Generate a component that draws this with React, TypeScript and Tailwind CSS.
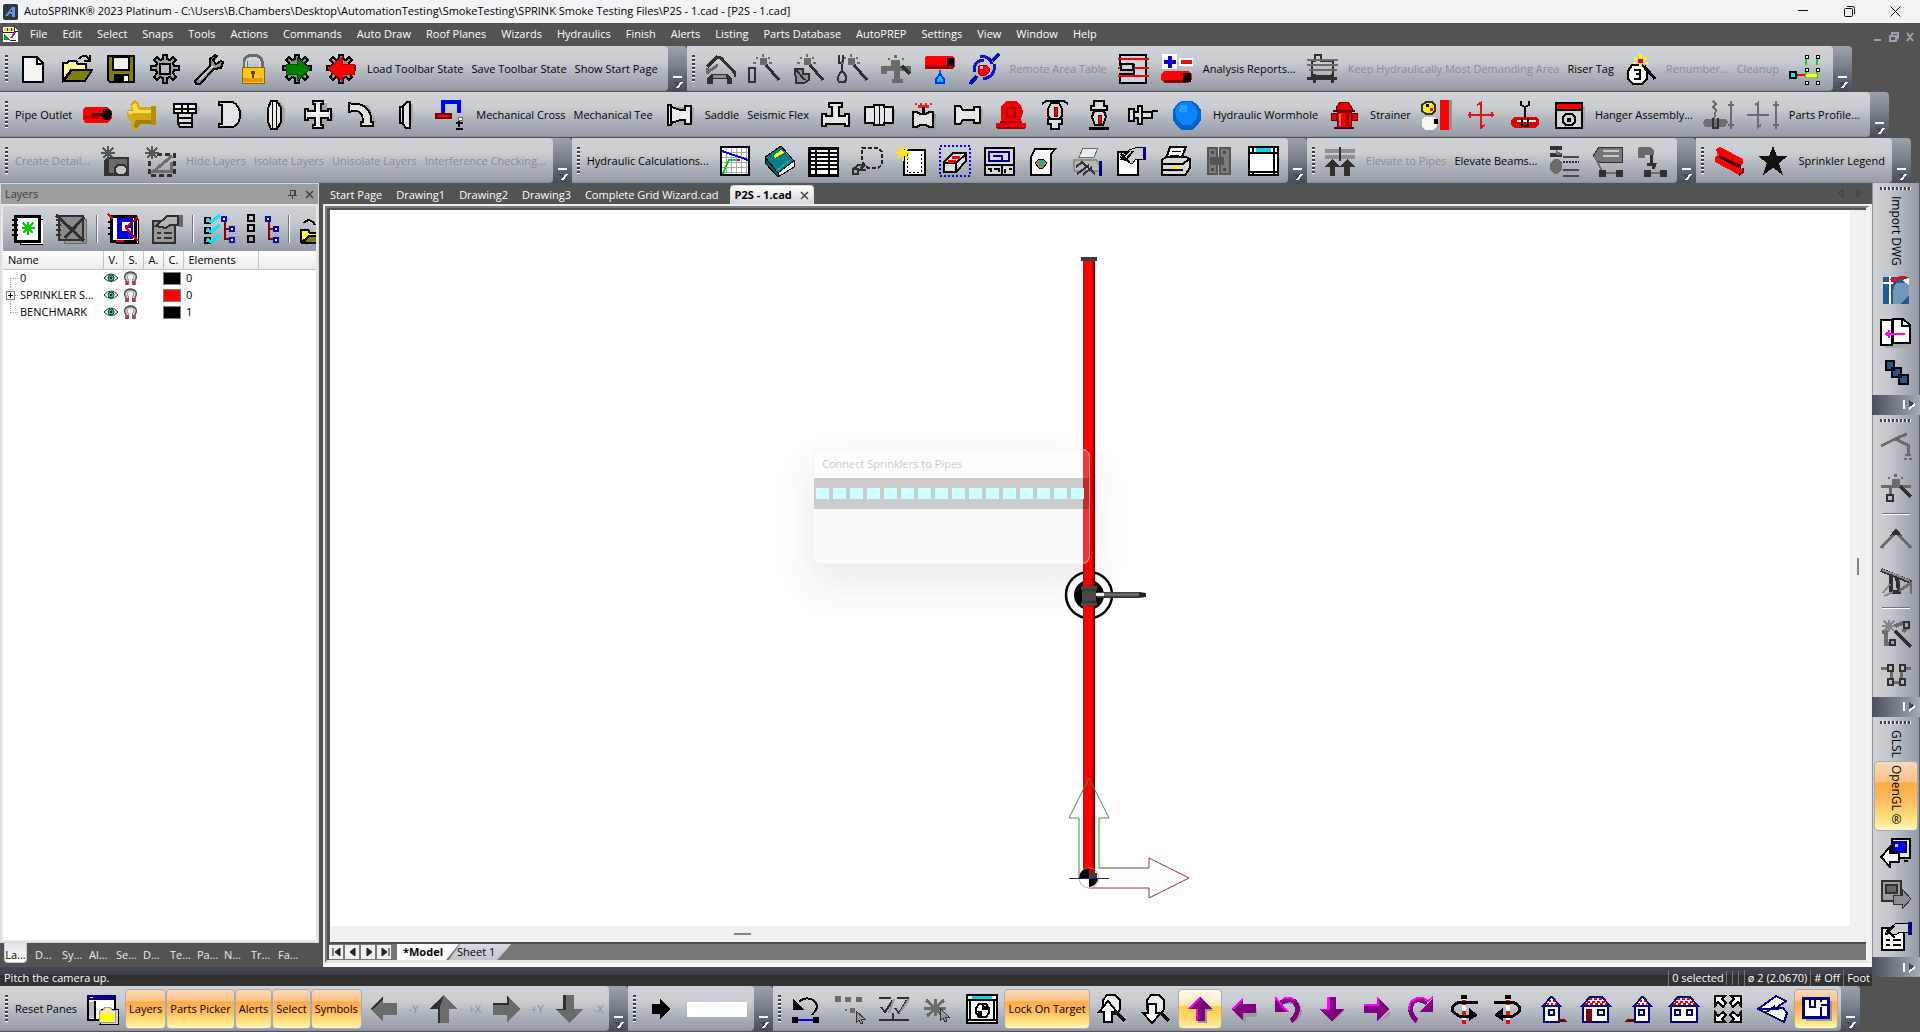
import React from "react";

type Shape = [d: string, fill?: string, stroke?: string, width?: number, dash?: string];

const K = "#000";
const W = "#fff";
const G = "#6b6b6b";
const D = "#303030";
const L = "#d4d7dc";
const R = "#ff0000";
const M = "#800080";
const N = "#000080";
const O = "#808000";
const S = "#9a9a9a";

const gearPath =
  "M14 2h4v4l3 1 3-3 3 3-3 3 1 3h5v4h-5l-1 3 3 4-3 3-3-3-3 1v5h-4v-5l-3-1-3 3-3-3 3-4-1-3H2v-4h5l1-3-3-3 3-3 3 3 3-1z";
const wand: Shape[] = [
  ["M14 1h2v3h-2zM8 4h2v2H8zM20 4h2v2h-2zM5 9h3v2H5z", G],
  ["M12 5h7v7h-7zM21 9h3v2h-3z", G],
  ["M18 12L31 27", "none", D, 3],
];

const icons: Record<string, Shape[]> = {
  newDoc: [["M6 4h14l6 6v19H6z", "#f4f4f4", K, 2], ["M20 4v7h6", "none", K, 2]],
  open: [
    ["M2 28V10h4l2-2h7l2 3h8v6H10z", "#ffff9c", K, 2],
    ["M3 28L11 17h20L24 28z", O, K, 2],
    ["M18 6q5-6 9-1l2 2m0-5v6h-6", "none", K, 2],
  ],
  save: [
    ["M3 3h26v26H5l-2-2z", O, K, 2],
    ["M8 4h16v13H8z", "#f0f0f0", K, 2],
    ["M9 21h15v8H9z", K],
    ["M19 23h4v5h-4z", W],
  ],
  gear: [[gearPath, "#a2a2a2", K, 2], ["M11 11h10v10H11z", "#b9bcc2", K, 2]],
  wrench: [
    ["M2 28L17 13V6l5-4 2 1-4 4 3 4 5-3 2 1-2 6-7 1L7 31H3z", "#8e8e8e", K, 2],
    ["M6 27L20 13", "none", "#c4c4c4", 2],
  ],
  lock: [
    ["M8 15V8q1-5 8-5t8 5v7", "none", G, 5],
    ["M9 14V9q1-4 7-4t7 4v5", "none", L, 2],
    ["M5 14h22v16H5z", "#ffc414", "#8b6a00", 1],
    ["M6 25h20v4H6z", "#e09800"],
    ["M14 18h4v3h-1v4h-2v-4h-1z", "#5a4300"],
  ],
  gearIn: [[gearPath, "#8a8a8a", K, 2], ["M5 11h11V4l13 12-13 12v-7H5z", "#008000", "#045004", 1]],
  gearOut: [[gearPath, "#8a8a8a", K, 2], ["M29 11H17V4L3 16l14 12v-7h12z", R, "#c00000", 1]],
  pipeHead: [
    ["M3 14L13 4l4 1 14 15v4", "none", D, 3],
    ["M3 15v6M4 19L14 12", "none", G, 3],
    ["M3 31v-6l4-4h17l4 5v5h-5v-5H9v5z", D],
    ["M9 22h13v3H9z", "#8f8f8f"],
  ],
  wandPipe: [["M1 15h6v14H1z", "none", D, 2], ...wand],
  wandFit: [["M3 16h8v5h6v6l-5 3H4z", "#8d9096", D, 2], ["M3 16l10 11", "none", D, 2], ...wand],
  wandLoop: [["M3 2v8h4V2M6 8v10q-6 6-3 11h6q3-6-3-11", "none", D, 2], ...wand],
  wandTee: [
    ["M1 13h30v8h-4v-3h-7v8h3v4h-11v-4h2v-8H7v3H1z", G],
    ["M14 2h3v3h-3zM8 5h2v2H8zM22 5h2v2h-2zM11 7h9v7h-9z", G],
    ["M22 13l8 8", "none", D, 3],
  ],
  redDrop: [
    ["M1 6h28l2 2v5l-3 3H1z", "#b00000"],
    ["M2 3h26l3 3v6H1V5z", R],
    ["M23 5h7v8h-7z", K],
    ["M16 17v6", "none", "#0060ff", 2],
    ["M16 21l4 5v4h-8v-4z", "#00c8ff", "#0030ff", 2],
  ],
  orbit: [
    ["M2 31L9 23M24 8l7-7", "none", "#0010b0", 4],
    ["M6 19q0-12 10-12M26 11q2 13-11 15M12 4q9-2 12 7", "none", "#1010d0", 3],
    ["M12 12h6l3 3v4l-3 3h-6l-2-3v-4z", R, "#8b0000", 1],
    ["M12 13h3v3h-3z", "#ffb0b0"],
  ],
  remote: [
    ["M3 2h26v28H3v-9h14v-9H3z", "#d4d4d8", K, 2],
    ["M1 6h31M1 15h31M1 23h31", "none", R, 2],
    ["M4 11h12v6H4z", L, K, 2],
  ],
  analysis: [
    ["M1 1h15v15H1zM18 5h14v8H18z", W],
    ["M7 3h4v4h4v4h-4v4H7v-4H3V7h4z", "#0000e0"],
    ["M20 7h11v4H20z", R],
    ["M3 18h24l4 4v5l-4 3H3l-3-4v-4z", R],
    ["M3 27h22v3H3z", "#8b0000"],
    ["M22 20h8v9h-8z", K],
  ],
  table3d: [
    ["M9 2h6v6h12v15H6V8h3z", "none", D, 2],
    ["M1 7h31M1 12h31M3 17h28", "none", G, 2],
    ["M1 25h30M8 21v9M26 21v9", "none", D, 3],
  ],
  number: [
    ["M8 12h10l5 6v8l-5 5H9l-5-5v-8z", W, K, 2],
    ["M10 17h6v4h-4 4v5h-6", "none", K, 2],
    ["M15 1h3v4h-3zM10 4h3v3h-3zM20 4h3v3h-3zM9 9h3v2H9zM21 9h3v2h-3zM15 11h3v3h-3z", "#ffff00"],
    ["M14 6h5v4h-5z", R],
    ["M20 13L31 26", "none", K, 3],
  ],
  cleanup: [
    ["M17 4v24M28 4v24", "none", "#00e000", 2, "8 5"],
    ["M17 22h11", "none", "#ffff00", 3],
    ["M8 22h8", "none", R, 2],
    ["M1 19h6v6H1z", "#00e8ff", K, 2],
    ["M16 2h3v3h-3zM27 2h3v3h-3zM16 15h3v3h-3zM27 15h3v3h-3zM16 28h3v3h-3zM27 28h3v3h-3z", W, K, 1],
  ],
  redPipe: [
    ["M3 8h22l5 4v8l-5 4H3l-2-4v-9z", R],
    ["M2 17h19v3H2z", "#c00000"],
    ["M10 14h12v3H10z", "#500"],
    ["M22 10h6l2 5-2 6h-6l-2-6z", K],
  ],
  goldTee: [
    ["M4 5l5-4 3 2 2 5h16v17H15l-4 6-3 1-4-4 2-5-5-4V12l5-2z", "#d6a812"],
    ["M2 12h6l-2-6 4-2 3 7h13v3H8L3 16z", "#ffe04a"],
    ["M25 7h5v19h-5z", "#b88c08"],
    ["M10 21h15v4H14l-4 5-2-3z", "#a47c08"],
  ],
  plug: [
    ["M6 7h24v9H6z", "#b8babd"],
    ["M4 5h22v9H4z", "#f2f2f2", K, 2],
    ["M4 10h22M12 5v9M18 5v9", "none", K, 2],
    ["M8 14v11l2 3h12V14zM8 19h14M8 24h14", "#dcdee0", K, 2],
  ],
  dcap: [["M8 5h14q7 5 7 12t-7 13H8z", "#b0b0b0"], ["M5 3h14q7 4 7 13t-7 12H5v-3h3V6H5z", "#e2e4e8", K, 2]],
  coupling: [["M17 3h6l4 7v14l-4 7h-6z", "#a4a4a4"], ["M13 2h6l4 7v14l-4 7h-6l-3-7V9z", "#eee", K, 2], ["M14 3v26M18 3v26", "none", K, 1]],
  cross: [
    ["M13 4h12v28H13zM4 14h30v8H4z", "#a4a4a4"],
    ["M11 2h10v3h-2v7h7v-2h3v11h-3v-2h-7v7h2v3H11v-3h2v-7H6v2H3V10h3v2h7V5h-2z", "#e4e6ea", K, 2],
    ["M15 6v20M6 14h20", "none", W, 2],
  ],
  elbow: [
    ["M7 7h12q8 3 8 20l3 3v-8L22 6z", "#a4a4a4"],
    ["M3 4v9l4-1q10-1 10 11h-2v4h12v-4h-2q1-15-13-18H7L3 4z", "#e2e4e6", K, 2],
  ],
  cap: [["M19 5h4v26h-4z", "#a4a4a4"], ["M17 3h3v26h-4l-3-4V7zM13 8h-3v16h3", "#e4e4e4", K, 2]],
  goose: [
    ["M9 15V3h16v11", "none", "#0000ff", 4],
    ["M2 15h15v4H2z", R, "#700", 2],
    ["M24 18h4v3h-4z", W, G, 1],
    ["M22 24h7M25 22v6M22 30h7", "none", K, 2],
  ],
  saddleFit: [["M9 8h22v18H9z", "#a8a8a8"], ["M5 6h3v20H5zM8 8l10 3h4V7h6v18h-6v-4h-4L8 24z", "#eceef0", K, 2]],
  tee: [
    ["M5 18h27v11H5z", "#a8a8a8"],
    ["M10 4h13v4h-3v9h6v-2h4v12h-4v-2H7v2H3V15h4v2h6V8h-3z", "#e6e8ea", K, 2],
  ],
  union: [["M5 10h27v17H5z", "#a8a8a8"], ["M2 8h9V6h10v2h9v16h-9v2H11v-2H2z", "#e4e6e8", K, 2], ["M11 6v20M16 6v20M21 6v20", "none", K, 1]],
  flexFit: [
    ["M28 15v15H9", "none", S, 2],
    ["M6 13h4l3 2h6l3-2h4v15h-4l-3-2h-6l-3 2H6z", "#e4e4e4", K, 2],
    ["M8 4h2v2H8zM13 4h2v2h-2zM18 4h2v2h-2zM23 4h2v2h-2zM11 6h11v3H11z", "#e02020"],
    ["M15 8h3v6h-3z", K],
  ],
  reducer: [["M6 10h26v16H6z", "#a8a8a8"], ["M4 7h5l3 4h11V8h6v16h-6v-3H12l-3 4H4z", "#e4e6e8", K, 2]],
  valve: [
    ["M11 2h10l5 4 2 7-2 7 1 4h4v5H1v-5h5V7z", "#f00000"],
    ["M12 9h8v9h-8z", "none", "#a80000", 2],
    ["M2 29h28M5 23h22", "none", "#900", 2],
  ],
  pendent: [
    ["M3 5l4-3h18l4 3", "none", K, 2],
    ["M12 4h8l3 6v7l-4 4h-6l-4-4v-7z", L, K, 2],
    ["M15 8h3v9h-3z", R, "#700", 1],
    ["M9 20h14v5h-3v5h-8v-5H9z", "#dcdcdc", K, 2],
  ],
  upright: [
    ["M11 2h10v5h3v4H8V7h3z", "#dcdcdc", K, 2],
    ["M11 12h10l2 6-3 8h-8l-3-8z", L, K, 2],
    ["M15 16h3v8h-3z", R, "#700", 1],
    ["M6 29h20", "none", K, 3],
  ],
  sidewall: [["M2 10h5v12H2zM7 13h4V7h4v18h-4v-6H7zM15 13h10v6H15z", "#e0e0e0", K, 2], ["M25 12h6", "none", K, 2]],
  sphere: [
    ["M11 2h10l5 3 4 6v10l-4 6-5 4H11l-5-4-4-6V11l4-6z", "#0064d0"],
    ["M10 3h9l5 4 3 6-2 8-6 5h-7l-6-5-2-8 2-6z", "#0a84f8"],
    ["M9 6h7v7H8z", "#2b9cff"],
  ],
  hydrant: [
    ["M12 3h8l4 6v3H8V9zM9 13h14v15H9zM3 14h5v7H3zM24 14h5v7h-5z", "#f00000", "#600", 1],
    ["M5 12h22M6 29h20", "none", "#500", 2],
    ["M12 15v12", "none", "#ff6060", 2],
    ["M19 15v12", "none", "#900", 3],
  ],
  snowman: [
    ["M5 3h6l3 3v6l-3 3H5l-4-3V6z", "#fff200", "#333", 2],
    ["M5 5h3v3H5z", "#0000d0"],
    ["M9 9h3v3H9z", R],
    ["M3 18h10l3 3v7l-4 3H5l-4-3v-7z", "#f6f6f6"],
    ["M13 20h4v5h-4z", K],
    ["M19 1h9v30h-9z", R],
    ["M28 1h3v30h-3z", "#8f8f8f"],
  ],
  redCross: [["M16 3v27M3 16h26M12 6l5-3M15 29l5-3M5 13v6M27 13v5", "none", "#e81010", 2]],
  hanger: [
    ["M12 2v4l4 2 4-2V2M16 8v10", "none", K, 2],
    ["M5 18h22l3 3v5l-4 3H5l-3-4v-4z", "#e00000"],
    ["M8 22h19", "none", W, 2],
    ["M13 19v8h6v-8", "none", K, 2],
  ],
  redWindow: [
    ["M7 7h25v23H7z", "#a4a4a4"],
    ["M3 4h26v25H3z", "#cfd2d7", K, 2],
    ["M4 5h24v5H4z", R],
    ["M3 11h26", "none", K, 2],
    ["M13 15h6l3 3v5l-3 3h-6l-3-3v-5z", "none", K, 2],
    ["M14 19h4v4h-4z", K],
  ],
  hangerGray: [
    ["M10 2l3 3-3 3 3 3-2 9M28 2v28M25 6h6M25 26h6", "none", G, 2],
    ["M2 20h20l3 3-3 5H2l-2-4z", "#6e6e6e"],
    ["M10 19v10h5V19", "none", D, 2],
  ],
  crossGray: [["M11 3v26M0 16h22M8 6l4-3M10 29l4-3M29 2v28M26 6h6M26 26h6", "none", G, 2]],
  detail: [
    ["M7 12h22v19H4V15z", "#333"],
    ["M9 14h18v14H9z", G],
    ["M18 20h6l3 3v4l-3 3h-6l-3-3v-4z", "#c2c5ca", D, 2],
    ["M8 1v13M1 8h14M3 3l10 10M13 3L3 13", "none", "#555", 2],
  ],
  detail2: [
    ["M13 9h17v21H5V16", "none", D, 3, "5 3"],
    ["M28 11L10 26h17v-9", "none", G, 3],
    ["M8 1v13M1 8h14M3 3l10 10M13 3L3 13", "none", "#555", 2],
  ],
  chart: [
    ["M2 2h28v28H2z", W],
    ["M7 2v28M12 2v28M17 2v28M22 2v28M27 2v28M2 7h28M2 12h28M2 17h28M2 22h28M2 27h28", "none", "#a8acb4", 1],
    ["M2 2h28v28H2z", "none", K, 2],
    ["M3 6l26 9", "none", "#0000f0", 2],
    ["M4 29l3-8 3-6h4", "none", "#00c800", 2],
    ["M13 14h6v2h-6z", "#00c8e0"],
    ["M18 14h3v2h-3z", R],
  ],
  book: [
    ["M2 12L18 1l13 15-16 12z", "#008080", K, 1],
    ["M2 12l13 16v4L2 18z", "#005a5a", K, 1],
    ["M15 28l16-12v6L15 32z", "#f0f0f0", K, 1],
    ["M10 11l8-6 3 3-9 5z", "#ffee20"],
    ["M13 26l14-11", "none", "#20c0c0", 1],
  ],
  grid: [["M2 3h29v27H2z", W, K, 3], ["M2 8h29M2 12h29M2 16h29M2 20h29M2 24h29M9 3v27M22 3v27", "none", K, 2]],
  lasso: [
    ["M11 3h16l4 4v13l-4 3H17l-6-6z", "none", "#222", 2, "4 2"],
    ["M1 25l6-5h5l-3 5h6", "none", D, 2],
    ["M2 24h5v5H2zM14 20l-5 6", "none", D, 2],
  ],
  newSheet: [
    ["M9 5h21v25H9z", W, K, 2],
    ["M12 9v18h14V9", "none", K, 1, "2 2"],
    ["M8 1v15M1 8h14M3 3l11 11M13 3L3 13", "none", "#ffe800", 2],
  ],
  eraser: [
    ["M1 1h30v30H1z", "none", "#0000e8", 2, "2 2"],
    ["M5 17l9-9h13v8l-10 11H5z", "#dedede", K, 2],
    ["M5 18h12v8M17 18l10-9", "none", K, 2],
    ["M13 12h8M9 16h8", "none", R, 3],
  ],
  sheet: [
    ["M2 3h29v27H2z", "#d7d9dd", K, 2],
    ["M6 7h20v9H6z", "none", N, 2],
    ["M10 11h9v4", "none", N, 2],
    ["M2 20h29M19 20v10", "none", K, 2],
    ["M5 24h3v3M11 24h5v3M22 24v4M26 24h3", "none", K, 2],
  ],
  scroll: [
    ["M8 4h20l-4 5v21H4V12z", W, K, 2],
    ["M8 18l4-4h4l4 4-4 5h-4z", "#e07030", K, 1],
    ["M12 15h4v6h-4z", "#00b8a8"],
  ],
  printGray: [
    ["M12 3h15l-4 9H8z", "#eee", G, 1],
    ["M3 15h22l4 5v6H3z", "#b8b8b8", "#8e8e8e", 2],
    ["M5 22l6-5 13 12M6 29l12-9M12 30l9-8", "none", D, 2],
    ["M28 16h3v15h-3z", N],
  ],
  props: [
    ["M3 7h20v23H3z", W, K, 2],
    ["M5 12l9-7 9-3h5v12h-7l-4 5z", "#c8ccd0", K, 1],
    ["M6 9l9 9M14 6L6 15M18 6l-8 10", "none", K, 2],
    ["M28 2h3v13h-3z", N],
  ],
  print: [
    ["M11 2h16l-5 12H7z", W, K, 2],
    ["M13 6h9M11 10h9", "none", K, 1],
    ["M3 15l4-3h20l4 2v9l-5 7H3z", "#d8d8d8", K, 2],
    ["M3 19h21l6-5M3 25h21", "none", K, 2],
    ["M14 21h6v3h-6z", "#fff200"],
  ],
  cabinet: [
    ["M5 3h9v26H5zM17 3h10v26H17z", "#7c7c7c", "#555", 2],
    ["M7 12h14v8H7z", "#555"],
    ["M8 6h3v3H8zM20 6h3v3h-3zM8 23h3v3H8zM20 23h3v3h-3z", "#4a4a4a"],
  ],
  frame: [
    ["M2 2h29v28H2z", W, K, 2],
    ["M9 3h15v4H9z", "#00d8e8"],
    ["M2 8h29M6 2v5M27 2v28M2 27h29M6 27v3", "none", K, 1.5],
  ],
  elevate: [
    ["M1 4h30v4H1zM1 10h30v4H1z", "#8f8f8f"],
    ["M16 2v14", "none", D, 2],
    ["M8 14l8 8h-5v9H6v-9H1zM23 14l8 8h-5v9h-6v-9h-4z", D],
  ],
  profile1: [
    ["M2 1h12v4H2zM2 8h12v4H2z", D],
    ["M8 5l5 3v2H8z", G],
    ["M6 14h4l4 4v6l-4 5H6l-4-5v-6z", G],
    ["M15 12h16M15 25h16M15 31h16", "none", "#4a4a4a", 2],
    ["M15 17h16", "none", D, 2, "2 1"],
  ],
  profile2: [
    ["M7 2h23v15H7l-6-6z", "#777", D, 1],
    ["M11 6h16M11 11h16", "none", "#c6c6c6", 2],
    ["M3 12l8 16h16", "none", G, 2],
    ["M7 25h6v6H7zM24 25h6v6h-6z", D, D, 1],
  ],
  profile3: [
    ["M3 2h11l4 4v4H9v3H2V4z", G],
    ["M15 10v9M11 19h8l-2 5", "none", D, 3],
    ["M9 28h18", "none", G, 2],
    ["M8 25h6v6H8zM24 25h6v6h-6z", D, D, 1],
  ],
  beam: [
    ["M3 4l4-2 23 12v5l-3 2 3 5-4 4L2 17v-5l3-2z", R],
    ["M6 10l22 10v4L6 13z", "#300"],
    ["M26 30l4-3v-4", "none", "#600", 2],
  ],
  star: [["M16 1l4 10h11l-9 7 4 12-10-7-10 7 4-12-9-7h11z", "#111"]],
  layerNew: [
    ["M9 6h23v25H9z", W, K, 1],
    ["M4 3h24v25H4z", W, K, 3],
    ["M1 7h6M1 12h6M1 17h6M1 22h6", "none", K, 2],
    ["M17 9v13M11 15h13M12 10l10 10M22 10L12 20", "none", "#00d000", 2],
  ],
  layerDel: [
    ["M9 6h22v24H9z", "#999", G, 1],
    ["M4 3h24v24H4z", "#8a8a8a", D, 2],
    ["M1 2l28 26M29 4L10 25", "none", D, 3],
    ["M1 7h5M1 12h5M1 17h5M1 22h5", "none", D, 2],
  ],
  layerEdit: [
    ["M9 6h22v24H9z", "#e4e4e4", K, 1],
    ["M4 3h24v25H4z", W, K, 3],
    ["M10 5h16v21H10z", "#0000e8"],
    ["M15 9h9v3h-6v3h6v3h-9z", W],
    ["M1 1l5 5M31 4L19 15l12 13M9 28h8", "none", "#e00000", 2],
    ["M1 9h5M1 15h5M1 21h5", "none", K, 2],
  ],
  layerProps: [
    ["M2 8h22v22H2z", "#9a9a9a", D, 2],
    ["M6 20h4M13 20h8M6 25h4M13 25h8", "none", D, 2],
    ["M5 13L16 3h11v9h-8l-4 3z", "#b0b3b8", D, 2],
    ["M28 2h4v12h-4z", G],
  ],
  treeCheck: [
    ["M2 5h5v5H2zM2 15h5v5H2zM2 25h5v5H2z", "none", K, 2],
    ["M4 6l4 3 9-7M4 16l4 3 9-7M4 26l4 3 9-7", "none", "#00e8ff", 3],
    ["M22 6v20h6M22 16h7", "none", "#8b0000", 2],
    ["M19 4h4v4h-4zM27 14h4v4h-4zM27 25h4v4h-4z", W, "#0000c8", 2],
  ],
  treeBox: [
    ["M1 2h6v6H1zM1 12h6v6H1zM1 23h6v6H1z", "none", K, 2],
    ["M22 6v20h6M22 16h7", "none", "#8b0000", 2],
    ["M19 4h4v4h-4zM27 14h4v4h-4zM27 25h4v4h-4z", W, "#0000c8", 2],
  ],
  openCut: [
    ["M5 10q4-5 9-1l2 3", "none", K, 2],
    ["M2 29V17h7l2 3h16v4H10z", "#ffff40", K, 2],
    ["M4 30l6-7h20l-5 7z", O, K, 2],
  ],
  dwg: [
    ["M3 3h26v27H3z", "#235a94"],
    ["M16 9h13v12l-8 9h-8V16z", "#7297bb"],
    ["M10 2v28M3 9h10", "none", W, 2],
    ["M9 5h5l6-3h6v3h-7l-6 4z", R],
    ["M22 6l7 5V4z", "#e8eef4"],
  ],
  docs: [
    ["M5 6h27v26H5z", "#a4a7ac"],
    ["M1 4h11v25H1zM13 3h10l7 6v18H13z", W, K, 2],
    ["M22 3v7h8", "none", K, 2],
    ["M5 18h20M9 14v8M7 16v4", "none", "#ff00ff", 2],
  ],
  blocks: [["M6 3h8v9H6zM12 10h9v9h-9zM19 17h9v9h-9z", "#24568c", K, 2]],
  path1: [
    ["M1 16l14-7 12-5M15 9l13 6v9", "none", G, 3],
    ["M25 24h6v2h-6zM24 28h3v2h-3zM29 28h3v2h-3z", G],
  ],
  path2: [
    ["M1 14h30M10 14v12", "none", G, 3],
    ["M20 14l11 11", "none", D, 3],
    ["M7 23h6v6H7z", "#bbb", D, 2],
    ["M14 2h3v3h-3zM8 5h2v2H8zM21 5h2v2h-2zM12 7h8v8h-8z", G],
  ],
  peak: [["M1 24L16 8l15 16", "none", G, 3], ["M16 5l5 6-5-1-5 1z", D, D, 1]],
  path3: [
    ["M1 4l30 12M11 9v17h8l-2-15", "none", D, 4],
    ["M2 4l14 5 14 6M13 26L4 30M3 27l7-9", "none", "#8a8a8a", 2],
    ["M19 25l12-8v11", "none", G, 3],
  ],
  path4: [
    ["M2 14h4v12h8M15 8l8-3 4 4-4 5", "none", G, 4],
    ["M15 13l16 16", "none", D, 4],
    ["M9 2v12M2 8h13M4 3l10 10M14 3L4 13", "none", "#858585", 2],
    ["M10 22h5v5h-5zM24 4h5v6h-5z", "#aaa", D, 2],
  ],
  path5: [
    ["M1 8h10v14h10V8h10", "none", G, 3],
    ["M8 5h5v6H8zM20 5h5v6h-5zM8 19h5v6H8zM20 19h5v6h-5z", "#bbb", D, 2],
  ],
  viewBack: [
    ["M12 3h18v19H12z", "#e8e8e8", K, 2],
    ["M14 6h12v10H14z", "#0000f0", N, 2],
    ["M15 8h3v3h-3z", "#c0c8ff"],
    ["M1 21l9-10v6h9v9h-9v5z", W, K, 2],
    ["M24 25h4", "none", K, 2],
  ],
  viewFwd: [
    ["M2 3h19v20H2z", "#9c9ea2", D, 2],
    ["M6 7h11v8H6z", "#666", D, 2],
    ["M31 21l-9-10v6h-9v9h9v5z", "#8a8d92", D, 1],
  ],
  propsSide: [
    ["M2 8h22v22H2z", W, K, 2],
    ["M6 20h4M13 20h8M6 25h4M13 25h8", "none", K, 2],
    ["M5 13L16 3h12v9h-8l-4 3z", "#c8ccd0", K, 1],
    ["M7 10l8 8M14 6L6 15", "none", K, 2],
    ["M28 2h4v13h-4z", N],
  ],
  panes: [
    ["M1 3h27v24H1z", W, K, 2],
    ["M0 2h28v5H0z", N],
    ["M2 9h5v16H2z", "#b8bcc2"],
    ["M8 8v19", "none", K, 2],
    ["M15 16h16v15H13z", "#d4d4d4", K, 1],
    ["M12 17h4l2-3h5l2 3h3v12H12z", "#f4f0a0", S, 1],
    ["M13 21h14v7H13z", "#ffff00"],
    ["M3 4h3v1H3z", W],
  ],
  grayL: [["M2 16L15 3v7h14v12H15v7z", G], ["M2 16L15 3v3L5 16z", D]],
  grayU: [["M16 2l14 14h-8v14H11V16H2z", G], ["M11 16v14h2V14L16 4 2 16z", D]],
  grayR: [["M30 16L17 3v7H3v12h14v7z", G], ["M3 10h14V3l2 2v7H3z", D]],
  grayD: [["M16 30L2 16h8V2h11v14h9z", G], ["M10 2h3v15H4l-2-1h8z", D]],
  blackR: [["M7 11h8V6l10 10-10 10v-5H7z", K]],
  undo: [
    ["M9 9q6-6 14-2 6 5 3 10l-4 5", "none", K, 2],
    ["M3 6v11h11z", K],
    ["M6 27h20", "none", "#0000ff", 2],
    ["M2 24h6v6H2zM23 24h6v6h-6z", K],
  ],
  sel1: [
    ["M1 3h6v6H1zM11 4h6v5h-6zM22 4h6v5h-6zM16 15h5v5h-5zM11 16h2v2h-2z", G],
    ["M22 18v12l3-3 2 4 2-1-2-4h4z", "#999", D, 1],
  ],
  sel2: [
    ["M1 5h12M19 5h12M1 27h30M15 20v7", "none", D, 2],
    ["M3 14l4 5 8-12M17 15l4 5 8-13", "none", D, 2],
    ["M16 6l-5 14M31 6l-9 14", "none", "#999", 2],
  ],
  sel3: [
    ["M13 6v17M2 15h22M4 7l17 16M22 7L5 23", "none", G, 3],
    ["M18 15v13l3-3 2 4 2-1-2-4h4z", "#999", D, 1],
  ],
  target: [
    ["M1 2h30v28H1z", W, K, 2],
    ["M6 3h20v3H6z", "#00d8e8"],
    ["M1 7h30M4 7v20M28 7v20M1 27h30", "none", K, 2],
    ["M13 11h7l3 4v5l-3 4h-7l-3-4v-5z", "none", K, 2],
    ["M16 12v5h6v-3zM11 18h5v5h-3z", K],
  ],
  zoomIn: [
    ["M11 2h8l5 5v9l-3 5h-8l-6-5V7z", "#eee", K, 2],
    ["M21 20l8 8", "none", K, 4],
    ["M12 8l9 11h-5v10H8V19H3z", W, K, 2],
  ],
  zoomOut: [
    ["M11 2h8l5 5v9l-3 5h-8l-6-5V7z", "#eee", K, 2],
    ["M21 20l8 8", "none", K, 4],
    ["M12 30l9-10h-5v-9H8v9H3z", W, K, 2],
  ],
  up: [["M18 7l11 11h-6v12H14z", "#9b9b9b"], ["M16 3l12 13h-7v12h-9V16H4z", M], ["M16 3L4 16h3l9-10zM12 16v12h2V16z", "#f0f"]],
  left: [["M6 20l12 10v-6h11v-8z", "#9b9b9b"], ["M3 16L15 4v7h13v9H15v7z", M], ["M3 16L15 4v3L6 16z", "#f0f"]],
  down: [["M17 30l12-13h-6z", "#9b9b9b"], ["M16 28L3 16h8V4h9v12h8z", M], ["M11 4h3v13H6l-3-1h8z", "#f0f"]],
  right: [["M18 29l12-12v6z", "#9b9b9b"], ["M29 16L17 4v7H4v9h13v8z", M], ["M4 11h13V4l2 2v7H4z", "#f0f"]],
  rotL: [
    ["M12 9h10q8 5 5 14l-5 6", "none", "#9b9b9b", 4],
    ["M9 10q12-8 16 3 2 8-6 15", "none", M, 5],
    ["M3 5v14h14z", M],
    ["M4 4v2l12 13M11 6q6-3 12 1", "none", "#f0f", 2],
  ],
  rotR: [
    ["M23 10Q11 2 7 13q-2 8 6 15", "none", M, 5],
    ["M29 5v14H15z", M],
    ["M5 17q0-13 14-12l5 3 5-4", "none", "#f0f", 2],
  ],
  spinL: [
    ["M16 2v28", "none", W, 4],
    ["M16 7v5M16 18v5M16 27v4", "none", R, 4],
    ["M13 2h6v4h-6z", K],
    ["M30 9H11Q2 13 5 19l6 4h11", "none", K, 3],
    ["M21 15l9 7-9 6z", K],
  ],
  spinR: [
    ["M16 2v28", "none", W, 4],
    ["M16 7v5M16 18v5M16 27v4", "none", R, 4],
    ["M13 2h6v4h-6z", K],
    ["M2 9h19q9 4 6 10l-6 4H10", "none", K, 3],
    ["M11 15l-9 7 9 6z", K],
  ],
  house1: [
    ["M8 13h15v16H8z", W, N, 2],
    ["M7 13l8-9h1l8 9z", W, N, 2],
    ["M11 11h10M13 8h6", "none", R, 2, "2 2"],
    ["M13 17h5v5h-5z", "none", N, 2],
    ["M22 26h7l2 3h-9z", "#800000"],
  ],
  house2: [
    ["M3 13h25v16H3z", W, N, 2],
    ["M2 13l8-9h12l8 9z", W, N, 2],
    ["M5 11h22M7 9h18M9 6h14", "none", R, 2, "3 2"],
    ["M6 16h6v12H6z", "#800000"],
    ["M18 17h6v5h-6z", "none", N, 2],
  ],
  house3: [
    ["M11 13h14v16H11z", W, N, 2],
    ["M10 13l8-9h1l8 9z", W, N, 2],
    ["M14 11h9M16 8h6", "none", R, 2, "2 2"],
    ["M15 17h5v5h-5z", "none", N, 2],
    ["M3 26h7v3H1z", "#800000"],
  ],
  house4: [
    ["M3 13h26v16H3z", W, N, 2],
    ["M2 13l8-9h12l8 9z", W, N, 2],
    ["M5 11h22M7 9h18M9 6h14", "none", R, 2, "3 2"],
    ["M7 17h5v5H7zM19 17h5v5h-5z", "none", N, 2],
  ],
  expand: [
    ["M3 3h10l-3 3 4 4-3 4-5-5-3 4zM29 3H19l3 3-4 4 3 4 5-5 3 4zM3 29h10l-3-3 4-4-3-3-5 4-3-4zM29 29H19l3-3-4-4 3-3 5 4 3-4z", W, K, 2],
  ],
  iso: [
    ["M2 16L20 3l10 5-11 8 8-1 4 5-3 9z", W, N, 2],
    ["M2 16h17M9 20l10-7", "none", N, 2],
  ],
  plan: [
    ["M6 8h26v20H6z", "#9b9b9b"],
    ["M3 5h25v19H3z", W, N, 3],
    ["M10 5v9h5V5M21 5v4M21 14v10M21 12h6", "none", N, 2],
  ],
};

function Icon({ name }: { name: string }) {
  return (
    <svg viewBox="0 0 32 32" className="size-8 shrink-0" shapeRendering="crispEdges" aria-hidden="true">
      {icons[name].map(([d, fill = "none", stroke = "none", width = 1, dash], i) => (
        <path key={i} d={d} fill={fill} stroke={stroke} strokeWidth={width} strokeDasharray={dash} />
      ))}
    </svg>
  );
}

// Prefixes: "#" icon, "~" disabled label, "!" pressed, "^" pressed and hovered.
function Item({ spec, vertical = false }: { spec: string; vertical?: boolean }) {
  const on = spec.startsWith("!");
  const hover = spec.startsWith("^");
  const off = spec.startsWith("~");
  const body = on || hover || off ? spec.slice(1) : spec;
  const size = vertical ? "w-full" : "h-full";
  const hot = on
    ? " rounded-sm border border-[#a3acb8] bg-[linear-gradient(#fbd9b8_0%,#ffc285_28%,#ffab48_32%,#ffb95c_55%,#ffe482_85%,#ffeb9c_92%,#fff6d0_100%)]"
    : hover
      ? " rounded-sm border border-[#a3acb8] bg-[linear-gradient(#fffbe8_0%,#fbeaba_40%,#ffcf48_44%,#ffd65c_65%,#ffe9a0_95%,#fff6d0_100%)]"
      : "";
  if (body.startsWith("#")) {
    const name = body.slice(1);
    return (
      <button
        aria-label={name}
        className={"flex shrink-0 items-center justify-center " + size + (vertical ? " h-[42px]" : " w-11") + hot}
      >
        <Icon name={name} />
      </button>
    );
  }
  if (vertical) {
    return (
      <button className={"flex w-full shrink-0 items-center justify-center py-[3px] text-[12px]" + hot}>
        <span className="leading-4 whitespace-nowrap [writing-mode:vertical-rl]">{body}</span>
      </button>
    );
  }
  return (
    <button
      disabled={off}
      className={
        "flex h-full shrink-0 items-center justify-center text-[11px] whitespace-nowrap" +
        (on || body.length < 3 ? " px-[3px]" : " px-1") +
        (off ? " text-[#8a8d92]" : " text-black") +
        hot
      }
    >
      {body}
    </button>
  );
}

function Toolbar({ items, tight = false, children }: { items: string[]; tight?: boolean; children?: React.ReactNode }) {
  return (
    <div className="flex h-[45px] shrink-0 rounded-sm bg-[linear-gradient(#9ca3ae,#7d8591_40%,#464d5a)]">
      <div
        className={
          "flex items-center rounded-r-sm border-b border-[#8a919b] bg-[linear-gradient(#cfd2d7,#c9cdd2_35%,#aeb4bc_65%,#959ca6)] pt-[3px] pb-px " +
          (tight ? "pr-[3px]" : "pr-1.5")
        }
      >
        <span className="mr-[3px] ml-[5px] h-7 w-[3px] bg-[repeating-linear-gradient(#3c4048_0px,#3c4048_2px,#fff_2px,#fff_3px,transparent_3px,transparent_4px)]" />
        {items.map((s) => (
          <Item key={s} spec={s} />
        ))}
        {children}
      </div>
      <button aria-label="Toolbar options" className="flex w-[19px] items-end justify-center pb-0.5">
        <svg width="11" height="13" viewBox="0 0 11 13" shapeRendering="crispEdges" aria-hidden="true">
          <path d="M1 1h9" stroke="#fff" strokeWidth="2" />
          <path d="M1 6h9L6 11z" fill="#4a4a4a" />
          <path d="M10 6L5 12" stroke="#fff" strokeWidth="2" fill="none" />
        </svg>
      </button>
    </div>
  );
}

function SideBar({ items }: { items: string[] }) {
  return (
    <div className="flex flex-col bg-[linear-gradient(90deg,#4a515d,#7d8591_60%,#a4abb5)]">
      <div className="flex flex-col items-center border-r border-l border-r-[#59606b] border-l-[#8d939c] bg-[linear-gradient(90deg,#cfd2d7,#c4c8ce_35%,#a9afb8_70%,#949ba5)] px-px">
        <span className="mt-1 mb-[3px] h-[3px] w-8 bg-[repeating-linear-gradient(90deg,#3c4048_0px,#3c4048_2px,#fff_2px,#fff_3px,transparent_3px,transparent_4px)]" />
        {items.map((s, i) =>
          s === "|" ? (
            <span key={i} className="my-1 h-0.5 w-7 border-t border-[#6c727c] bg-white" />
          ) : (
            <Item key={i} spec={s} vertical />
          ),
        )}
      </div>
      <button aria-label="More" className="flex h-5 items-center justify-end pr-1">
        <svg width="13" height="11" viewBox="0 0 13 11" shapeRendering="crispEdges" aria-hidden="true">
          <path d="M1 1v9" stroke="#fff" strokeWidth="2" />
          <path d="M6 1v9l6-5z" fill="#4a4a4a" />
          <path d="M6 10L12 5" stroke="#fff" strokeWidth="2" />
        </svg>
      </button>
    </div>
  );
}

const menus = [
  "File", "Edit", "Select", "Snaps", "Tools", "Actions", "Commands", "Auto Draw", "Roof Planes", "Wizards",
  "Hydraulics", "Finish", "Alerts", "Listing", "Parts Database", "AutoPREP", "Settings", "View", "Window", "Help",
];
const row1a = ["#newDoc", "#open", "#save", "#gear", "#wrench", "#lock", "#gearIn", "#gearOut", "Load Toolbar State", "Save Toolbar State", "Show Start Page"];
const row1b = ["#pipeHead", "#wandPipe", "#wandFit", "#wandLoop", "#wandTee", "#redDrop", "#orbit", "~Remote Area Table", "#remote", "#analysis", "Analysis Reports...", "#table3d", "~Keep Hydraulically Most Demanding Area", "Riser Tag", "#number", "~Renumber...", "~Cleanup", "#cleanup"];
const row2 = ["Pipe Outlet", "#redPipe", "#goldTee", "#plug", "#dcap", "#coupling", "#cross", "#elbow", "#cap", "#goose", "Mechanical Cross", "Mechanical Tee", "#saddleFit", "Saddle", "Seismic Flex", "#tee", "#union", "#flexFit", "#reducer", "#valve", "#pendent", "#upright", "#sidewall", "#sphere", "Hydraulic Wormhole", "#hydrant", "Strainer", "#snowman", "#redCross", "#hanger", "#redWindow", "Hanger Assembly...", "#hangerGray", "#crossGray", "Parts Profile..."];
const row3a = ["~Create Detail...", "#detail", "#detail2", "~Hide Layers", "~Isolate Layers", "~Unisolate Layers", "~Interference Checking..."];
const row3b = ["Hydraulic Calculations...", "#chart", "#book", "#grid", "#lasso", "#newSheet", "#eraser", "#sheet", "#scroll", "#printGray", "#props", "#print", "#cabinet", "#frame"];
const row3c = ["#elevate", "~Elevate to Pipes", "Elevate Beams...", "#profile1", "#profile2", "#profile3"];
const row3d = ["#beam", "#star", "Sprinkler Legend"];
const bottomA = ["Reset Panes", "#panes", "!Layers", "!Parts Picker", "!Alerts", "!Select", "!Symbols", "#grayL", "~-Y", "#grayU", "~+X", "#grayR", "~+Y", "#grayD", "~-X"];
const bottomC = ["#undo", "#sel1", "#sel2", "#sel3", "#target", "!Lock On Target", "#zoomIn", "#zoomOut", "^#up", "#left", "#rotL", "#down", "#right", "#rotR", "#spinL", "#spinR", "#house1", "#house2", "#house3", "#house4", "#expand", "#iso", "!#plan"];

const docTabs = ["Start Page", "Drawing1", "Drawing2", "Drawing3", "Complete Grid Wizard.cad"];
const paneTabs = ["D...", "Sy...", "Al...", "Se...", "D...", "Te...", "Pa...", "N...", "Tr...", "Fa..."];
const layers = [
  { name: "0", color: "bg-black", count: 0 },
  { name: "SPRINKLER S...", color: "bg-[#ff0000]", count: 0 },
  { name: "BENCHMARK", color: "bg-black", count: 1 },
];

function LayersPane() {
  return (
    <section className="flex w-[319px] shrink-0 flex-col">
      <div className="flex min-h-0 flex-1 flex-col border border-[#d8d8d8] bg-white">
        <header className="flex h-5 shrink-0 items-center bg-[#9c9e9c] px-1 text-[11px] text-[#3c3c3c]">
          <h2 className="flex-1">Layers</h2>
          <button aria-label="Pin" className="mr-2">
            <svg width="9" height="10" viewBox="0 0 9 10" fill="none" stroke="#404040" shapeRendering="crispEdges">
              <path d="M2 1h5v5M2 1v5M0 6.5h9M4.500 7v3M6 1v5" />
            </svg>
          </button>
          <button aria-label="Close pane">
            <svg width="9" height="9" viewBox="0 0 9 9" stroke="#404040" strokeWidth="1.500">
              <path d="M1 1l7 7M8 1L1 8" />
            </svg>
          </button>
        </header>
        <div className="flex min-h-0 flex-1 flex-col border-2 border-[#e8e8e8]">
          <div className="flex h-[45px] shrink-0 items-center overflow-hidden bg-[linear-gradient(#cfd2d7,#c4c8ce_35%,#a9afb8_70%,#949ba5)] pl-0.5">
            {["#layerNew", "#layerDel", "|", "#layerEdit", "#layerProps", "|", "#treeCheck", "#treeBox", "|", "#openCut"].map((s, i) =>
              s === "|" ? (
                <span key={i} className="mx-[3px] h-7 w-0.5 shrink-0 border-l border-[#6c727c] bg-white" />
              ) : (
                <Item key={i} spec={s} />
              ),
            )}
          </div>
          <table className="w-full table-fixed border-collapse text-[11px] text-black">
            <colgroup>
              <col className="w-[100px]" />
              <col className="w-5" />
              <col className="w-5" />
              <col className="w-5" />
              <col className="w-5" />
              <col className="w-[75px]" />
              <col />
            </colgroup>
            <thead>
              <tr className="h-[18px] bg-[linear-gradient(#fdfdfd,#ececee)] text-left">
                {["Name", "V.", "S.", "A.", "C.", "Elements", ""].map((h, i) => (
                  <th
                    key={i}
                    className={
                      "border-b border-[#c4c4c4] p-0 pl-[5px] leading-[17px] font-normal " + (i < 6 ? "border-r" : "")
                    }
                  >
                    {h}
                  </th>
                ))}
              </tr>
            </thead>
            <tbody>
              {layers.map((l, i) => (
                <tr key={l.name} className="h-[17px]">
                  <td className="p-0">
                    <div className="flex h-[17px] items-center whitespace-nowrap">
                      <svg width="17" height="17" viewBox="0 0 17 17" className="shrink-0" shapeRendering="crispEdges">
                        <path
                          d={i === 0 ? "M7.500 8v9M7.500 8.500h8" : i === 1 ? "M7.500 0v17M7.500 8.500h8" : "M7.500 0v9M7.500 8.500h8"}
                          stroke="#9a9a9a"
                          strokeDasharray="1 1"
                          fill="none"
                        />
                        {i === 1 && <path d="M3.500 4.500h8v8h-8z" fill="#fff" stroke="#808080" />}
                        {i === 1 && <path d="M5 8.500h5M7.500 6v5" stroke="#000" />}
                      </svg>
                      {l.name}
                    </div>
                  </td>
                  <td className="p-0">
                    <svg width="16" height="12" viewBox="0 0 16 12" aria-label="Visible">
                      <path d="M1 6Q8-2 15 6Q8 13 1 6z" fill="#fff" stroke="#222" />
                      <circle cx="8" cy="6" r="3" fill="#30b080" stroke="#106040" />
                      <circle cx="8" cy="6" r="1" fill="#000" />
                    </svg>
                  </td>
                  <td className="p-0">
                    <svg width="15" height="15" viewBox="0 0 15 15" aria-label="Snap">
                      <path d="M4 14V9Q2 7 3 4.500Q4 2 7.500 2T12 4.500Q13 7 11 9V14" fill="none" stroke="#555" strokeWidth="3.500" />
                      <path d="M4.500 13V9Q2.500 7 3.500 4.500Q5 3 7.500 3T11.500 4.500Q12.500 7 10.500 9V13" fill="none" stroke="#d8d8d8" strokeWidth="1.500" />
                      <path d="M3 10h3v3H3zM9 10h3v3H9z" fill="#e03030" />
                    </svg>
                  </td>
                  <td />
                  <td className="p-0">
                    <span className={"block h-[13px] w-[18px] border border-[#808080] " + l.color} />
                  </td>
                  <td className="p-0 pl-[3px]">{l.count}</td>
                  <td />
                </tr>
              ))}
            </tbody>
          </table>
        </div>
      </div>
      <div className="flex h-6 shrink-0 pl-1 text-[11px] text-[#ececec]">
        <button className="mb-1 w-[23px] rounded-b-sm border border-t-0 border-[#b5d2d5] bg-[linear-gradient(#e0e2e6,#fff)] pt-1 leading-4 text-black">
          La...
        </button>
        {paneTabs.map((t, i) => (
          <button key={i} className={"mb-1 w-[27px] pt-1 text-left leading-4 " + (i === 0 ? "ml-2" : "")}>
            {t}
          </button>
        ))}
      </div>
    </section>
  );
}

function Drawing() {
  return (
    <svg className="absolute inset-0 size-full" aria-label="Drawing">
      <defs>
        <linearGradient id="pipe">
          <stop offset="0" stopColor="#d80000" />
          <stop offset="0.15" stopColor="#ff0000" />
          <stop offset="0.7" stopColor="#ff0000" />
          <stop offset="1" stopColor="#700000" />
        </linearGradient>
        <linearGradient id="arm" x1="0" y1="0" x2="0" y2="1">
          <stop offset="0" stopColor="#333" />
          <stop offset="0.4" stopColor="#777" />
          <stop offset="1" stopColor="#222" />
        </linearGradient>
      </defs>
      <circle cx="759" cy="385" r="23" fill="none" stroke="#000" strokeWidth="2.500" />
      <circle cx="759" cy="385" r="15" fill="#000" />
      <path d="M753 50h12v616h-12z" fill="url(#pipe)" />
      <path d="M751 47h16v4h-16z" fill="#3c3c3c" />
      <path d="M751 376h16v4h-1v12h1v4h-16v-4h1v-12h-1z" fill="#484848" />
      <path d="M751 380h16M751 392h16" stroke="#2a2a2a" />
      <path d="M767 382h42v6h-42z" fill="url(#arm)" />
      <path d="M809 382l7 1v4l-7 1z" fill="#222" />
      <path d="M766 383h8v3h-8z" fill="#eee" />
      <path d="M749 668v-60h-10l20-40 20 40h-10v50" fill="none" stroke="#3d9140" />
      <path d="M769 658h50v-10l40 20-40 20v-10h-60" fill="none" stroke="#8e3a3a" />
      <circle cx="759" cy="668" r="10" fill="#fff" stroke="#bbb" />
      <path d="M759 668v-10a10 10 0 0 0-10 10zM759 668v9a9 9 0 0 0 9-9z" fill="#000" />
      <path d="M759 663h8v5h-8z" fill="#3c3c3c" />
      <path d="M759 658a10 10 0 0 1 6 2v3h-6z" fill="#c80000" />
      <path d="M739 668.500h40" stroke="#20208c" />
    </svg>
  );
}

function ProgressDialog() {
  return (
    <div
      role="dialog"
      aria-label="Connect Sprinklers to Pipes"
      className="absolute top-[239px] left-[483px] h-[115px] w-[277px] overflow-hidden rounded-lg border border-[#ececec]/60 bg-white/20 shadow-[0_18px_36px_4px_rgba(0,0,0,0.08)]"
    >
      <div className="h-7 bg-[#8888ff]/2 px-2 text-[11px] leading-7 text-[#c9c9c9]">Connect Sprinklers to Pipes</div>
      <div className="flex h-[31px] items-center gap-1 overflow-hidden bg-black/20 pl-0.5">
        {Array.from({ length: 16 }, (_, i) => (
          <span key={i} className="h-[11px] w-[13px] shrink-0 bg-[#ccffff]" />
        ))}
      </div>
      <div className="h-14 bg-black/1" />
    </div>
  );
}

const navPaths = ["M3 2v8M10 2v8L5 6z", "M9 2v8L4 6z", "M5 2v8l5-4z", "M4 2v8l5-4zM11 2v8"];

function DocumentArea() {
  return (
    <section className="ml-1 flex min-w-0 flex-1 flex-col">
      <div className="flex h-[21px] shrink-0 items-end text-[11px] text-white">
        {docTabs.map((t) => (
          <button key={t} className="h-5 px-[7px] pt-0.5">
            {t}
          </button>
        ))}
        <button className="ml-1 flex h-[19px] items-center gap-2 rounded-t-sm border border-b-0 border-[#cfe6e8] bg-[linear-gradient(#fff,#d4d6dc)] px-1 pt-px font-bold text-black">
          P2S - 1.cad
          <svg width="9" height="9" viewBox="0 0 9 9" stroke="#444" strokeWidth="1.500" aria-hidden="true">
            <path d="M1 1l7 7M8 1L1 8" />
          </svg>
        </button>
        <svg width="26" height="9" viewBox="0 0 26 9" className="mr-2 mb-1.5 ml-auto" fill="none" stroke="#3a3a3a">
          <path d="M5 0v8L1 4zM19 0v8l4-4z" />
        </svg>
      </div>
      <div className="flex min-h-0 flex-1 flex-col border-2 border-b-4 border-[#ececec] border-b-white">
        <div className="flex min-h-0 flex-1 flex-col border-2 border-r-4 border-b-[3px] border-[#7b7b7b] border-r-[#f4f4f4] border-b-[#e4e4e4] pt-px pl-0.5">
          <div className="flex min-h-0 flex-1 border-t border-l border-[#555]">
            <div className="relative min-w-0 flex-1 overflow-hidden bg-white">
              <Drawing />
              <ProgressDialog />
            </div>
            <div className="flex w-4 shrink-0 justify-center bg-[#f0f0f0] pt-[348px]">
              <span className="h-[17px] w-0.5 bg-[#858585]" />
            </div>
          </div>
          <div className="h-4 shrink-0 border-l border-[#555] bg-[#f0f0f0] pt-[7px] pl-[404px]">
            <span className="block h-0.5 w-[17px] bg-[#858585]" />
          </div>
          <div className="flex h-[18px] shrink-0 items-center border-t-2 border-[#4e4e4e] bg-[#777] text-[11px]">
            <div className="flex gap-0.5 pr-1.5">
              {navPaths.map((d, i) => (
                <button key={i} aria-label={"Sheet navigation " + (i + 1)} className="flex h-[14px] w-[14px] items-center justify-center bg-[#f0f0f0]">
                  <svg width="13" height="12" viewBox="0 0 13 12" fill="#222" stroke="#222" strokeWidth="1">
                    <path d={d} />
                  </svg>
                </button>
              ))}
            </div>
            <button className="h-full bg-white pr-4 pl-1.5 font-bold text-black [clip-path:polygon(0_0,100%_0,calc(100%-13px)_100%,0_100%)]">
              *Model
            </button>
            <button className="-ml-2.5 h-full bg-[linear-gradient(#d8dbe0,#c0c6ce)] pr-4 pl-2 text-black [clip-path:polygon(11px_0,100%_0,calc(100%-14px)_100%,0_100%)]">
              Sheet 1
            </button>
          </div>
        </div>
      </div>
    </section>
  );
}

export default function App() {
  return (
    <div className="flex h-screen flex-col overflow-hidden bg-[#535353] font-['Open_Sans','Noto_Sans',sans-serif] text-[11px] text-black">
      <header className="flex h-[23px] shrink-0 items-center bg-[#f2f3f7] pl-[3px] text-[11px]">
        <svg width="15" height="16" viewBox="0 0 15 16" className="mr-1.5" aria-hidden="true">
          <rect width="15" height="16" rx="2" fill="#32363e" />
          <path d="M2 12L9 3h3v10H9v-3H6l-1 2zM7 8h2V5z" fill="#5b9be8" />
        </svg>
        <h1 className="flex-1 truncate">
          AutoSPRINK® 2023 Platinum - C:\Users\B.Chambers\Desktop\AutomationTesting\SmokeTesting\SPRINK Smoke Testing Files\P2S - 1.cad - [P2S - 1.cad]
        </h1>
        <button aria-label="Minimize" className="flex w-[46px] justify-center">
          <svg width="11" height="10" viewBox="0 0 11 10" stroke="#111" fill="none"><path d="M0 3.500h10" /></svg>
        </button>
        <button aria-label="Restore" className="flex w-[46px] justify-center">
          <svg width="11" height="11" viewBox="0 0 11 11" stroke="#111" fill="none">
            <rect x="0.500" y="2.500" width="8" height="8" rx="1" />
            <path d="M3 .5h5.500q2 0 2 2V8" />
          </svg>
        </button>
        <button aria-label="Close" className="mr-0.5 flex w-[46px] justify-center">
          <svg width="11" height="11" viewBox="0 0 11 11" stroke="#111" fill="none"><path d="M.5.5l10 10M10.500.5l-10 10" /></svg>
        </button>
      </header>
      <nav className="flex h-[23px] shrink-0 items-center gap-px pl-[3px] text-white">
        <svg width="15" height="15" viewBox="0 0 15 15" className="mr-1" shapeRendering="crispEdges" aria-hidden="true">
          <path d="M0 0h11l4 4v11H0z" fill="#fff" />
          <path d="M1 1h10v3H1z" fill="#e8e020" />
          <path d="M1 6l6 7H1z" fill="#00b000" />
          <path d="M8 11l5-7" stroke="#c02080" strokeWidth="2" />
          <path d="M0 5h11M4 1v3M8 1v3M11 0v4h4M7 13h6" stroke="#222" fill="none" />
        </svg>
        {menus.map((m) => (
          <button key={m} className="px-[7px]">{m}</button>
        ))}
        <svg width="42" height="10" viewBox="0 0 42 10" className="mt-1 mr-1 ml-auto" fill="none" stroke="#9aa3b2" strokeWidth="2" aria-hidden="true">
          <path d="M0 8h7M16 4h6v5h-6zM18 3V1h6v6M33 1l6 8M39 1l-6 8" />
        </svg>
      </nav>
      <div className="flex shrink-0 flex-col gap-px">
        <div className="flex"><Toolbar items={row1a} /><Toolbar items={row1b} /></div>
        <div className="flex"><Toolbar items={row2} /></div>
        <div className="flex">
          <Toolbar items={row3a} tight />
          <Toolbar items={row3b} tight />
          <Toolbar items={row3c} tight />
          <Toolbar items={row3d} tight />
        </div>
      </div>
      <div className="flex min-h-0 flex-1">
        <div className="flex min-w-0 flex-1 flex-col">
          <main className="flex min-h-0 flex-1">
            <LayersPane />
            <DocumentArea />
          </main>
          <footer className="flex h-[19px] shrink-0 items-center bg-[linear-gradient(#434754_0%,#3c404c_40%,#2e2e2e_45%,#343434_100%)] pt-[3px] pl-1 text-white">
            <span className="flex-1">Pitch the camera up.</span>
            <span className="border-l border-[#777] pr-0.5 pl-[3px]">0 selected</span>
            <span className="h-3.5 w-1.5 border-l border-[#777]" />
            <span className="h-3.5 w-1.5 border-l border-[#777]" />
            <span className="h-3.5 w-1.5 border-l border-[#777]" />
            <span className="border-l border-[#777] px-[3px]">ø 2 (2.0670)</span>
            <span className="border-l border-[#777] px-[3px]"># Off</span>
            <span className="border-l border-[#777] pr-0.5 pl-[3px]">Foot</span>
          </footer>
        </div>
        <aside className="flex w-12 shrink-0 flex-col">
          <SideBar items={["Import DWG", "#dwg", "#docs", "#blocks"]} />
          <SideBar items={["#path1", "#path2", "|", "#peak", "#path3", "|", "#path4", "#path5"]} />
          <SideBar items={["GLSL", "!OpenGL®", "#viewBack", "#viewFwd", "#propsSide"]} />
        </aside>
      </div>
      <div className="flex shrink-0 pb-px">
        <Toolbar items={bottomA} tight />
        <Toolbar items={["#blackR"]} tight>
          <input aria-label="Value" className="mx-1 h-[15px] w-[60px] bg-white px-1 text-[11px]" />
        </Toolbar>
        <Toolbar items={bottomC} tight />
      </div>
    </div>
  );
}
